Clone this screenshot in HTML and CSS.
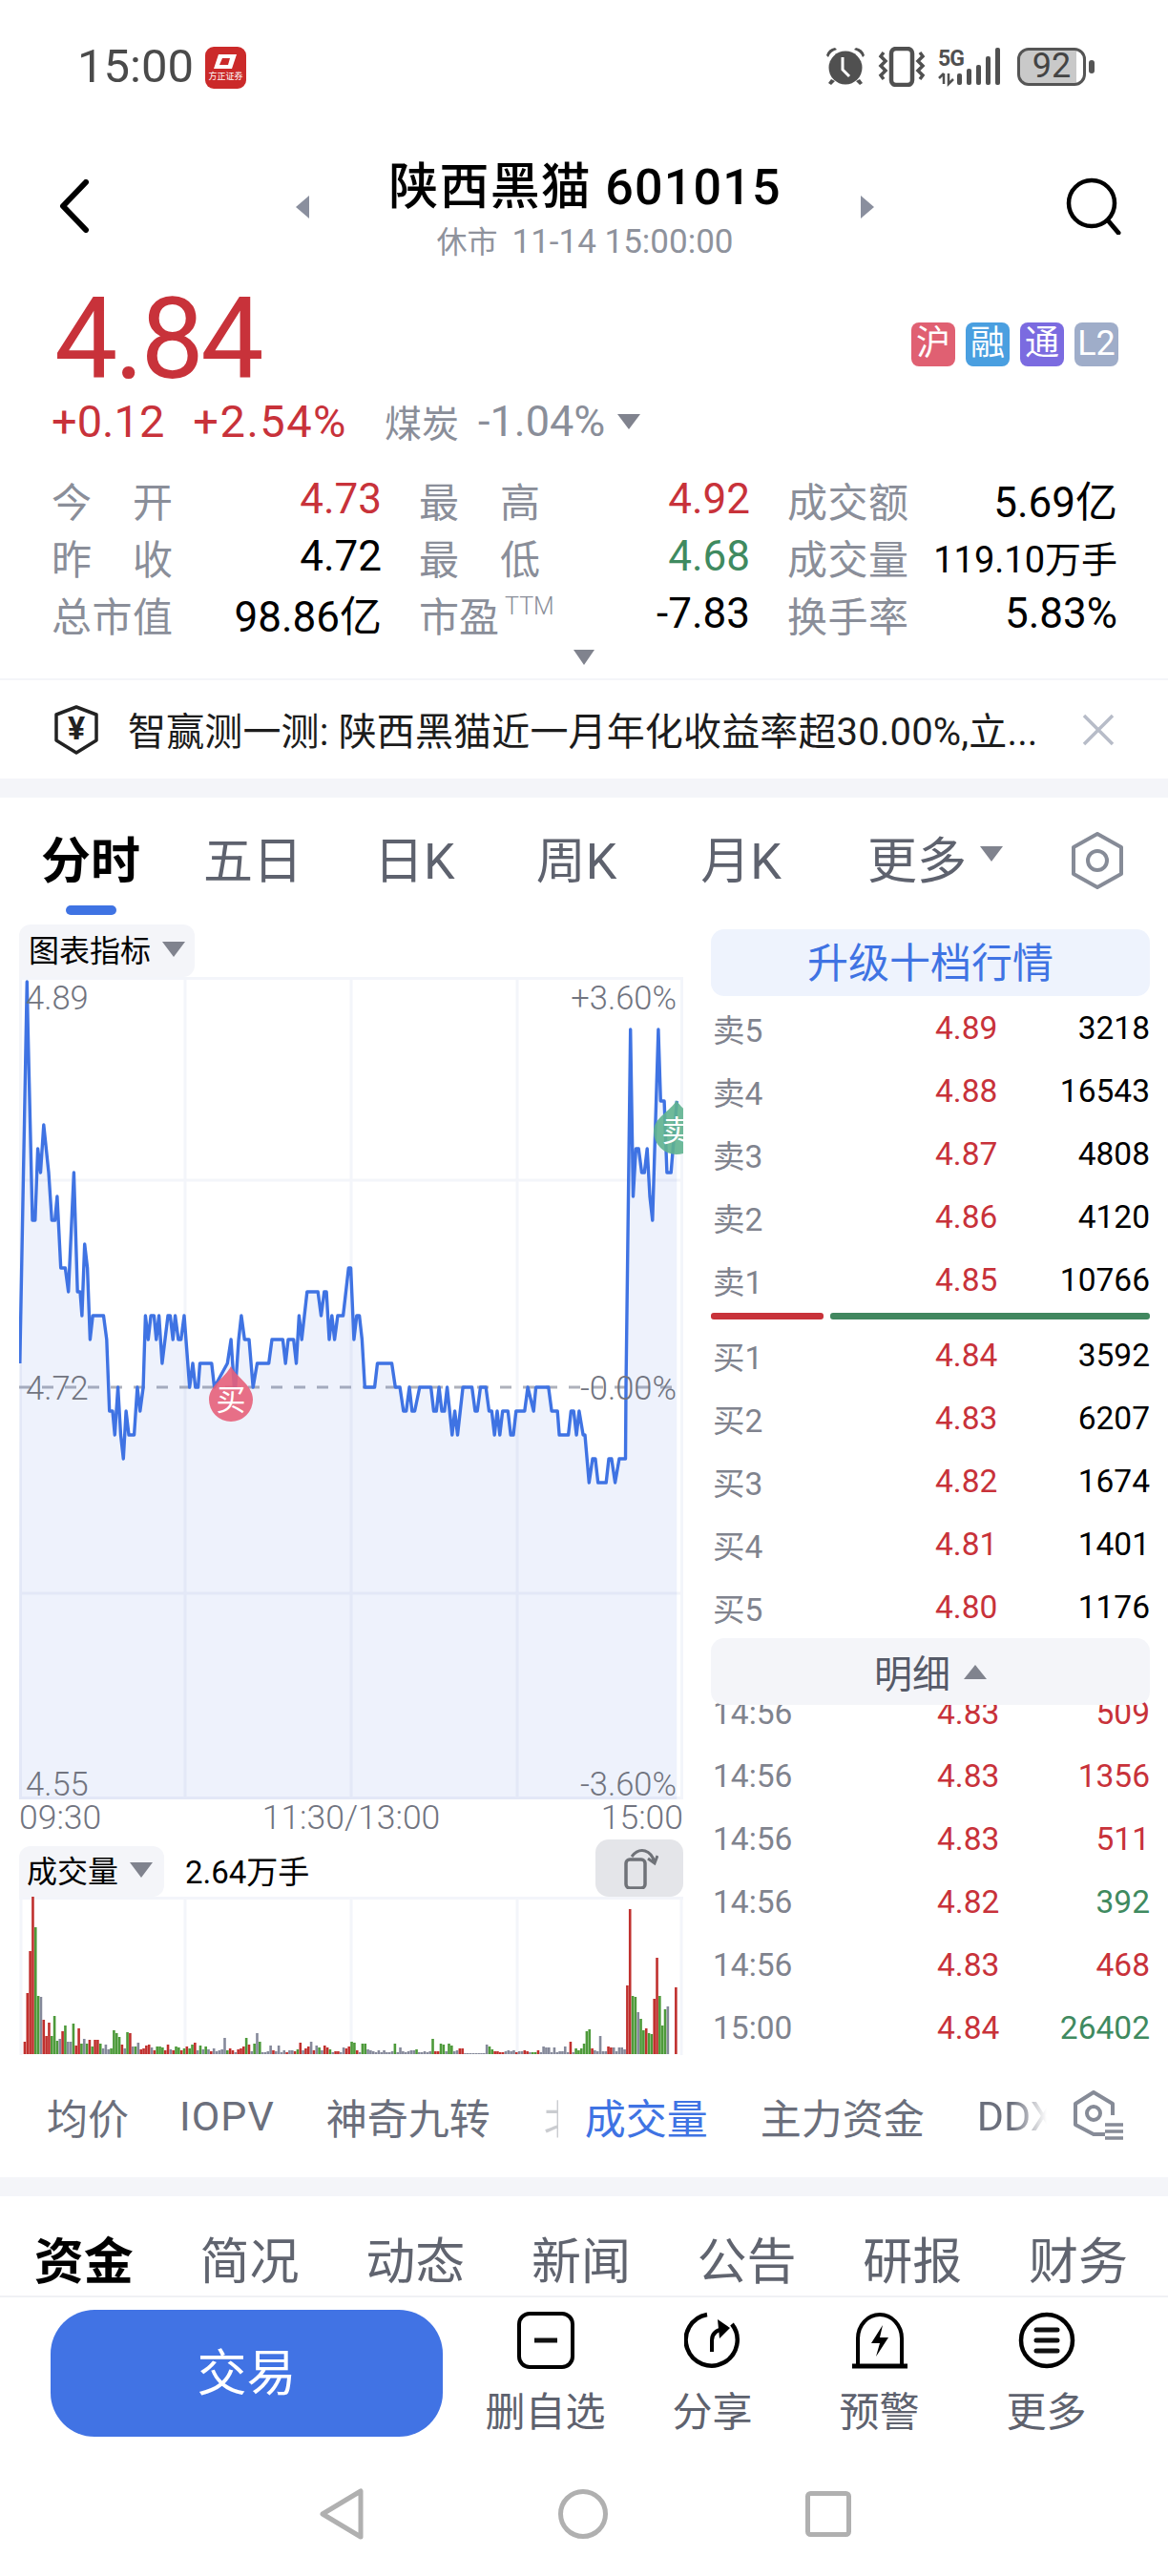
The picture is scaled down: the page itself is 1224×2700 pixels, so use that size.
FILE: index.html
```html
<!DOCTYPE html>
<html lang="zh-CN">
<head>
    <meta charset="UTF-8">
    <meta name="viewport" content="width=device-width, initial-scale=1.0">
    <title>陕西黑猫 601015</title>
    <link rel="stylesheet" href="styles.css">
</head>
<body>
    <!-- Status bar -->
    <div class="statusbar">
        <span class="clock">15:00</span>
        <svg class="app-logo" viewBox="0 0 43 44">
            <rect width="43" height="44" rx="9" fill="#cb2a2a"/>
            <path d="M14 8h19l-5 15H9z M18 12l-3 7h9l2-7z" fill="#fff" fill-rule="evenodd"/>
            <text class="logo-text" x="21.5" y="34" text-anchor="middle">方正证券</text>
        </svg>
        <div class="status-right">
            <svg class="st-alarm" viewBox="0 0 42 42">
                <path d="M1 9 Q3 2 10 1 L12 3 Q5 5 3 11z M41 9 Q39 2 32 1 L30 3 Q37 5 39 11z" fill="#505050"/>
                <circle cx="21" cy="22" r="17.500" fill="#505050"/>
                <path d="M6 34l-3 4 3 2 4-4z M36 34l3 4-3 2-4-4z" fill="#505050"/>
                <path d="M18 11v13l7 7" fill="none" stroke="#fff" stroke-width="3"/>
            </svg>
            <svg class="st-vibrate" viewBox="0 0 50 42">
                <rect x="14" y="2" width="22" height="38" rx="5" fill="none" stroke="#505050" stroke-width="4.500"/>
                <path d="M6 6l-3 4 5 5-5 5 5 5-5 5 3 4 M44 6l3 4-5 5 5 5-5 5 5 5-3 4" fill="none" stroke="#505050" stroke-width="3.500"/>
            </svg>
            <svg class="st-signal" viewBox="0 0 66 42">
                <text class="fiveg" x="0" y="20">5G</text>
                <path d="M6 28v11M1 33l5-5M11 28v11l5-5" fill="none" stroke="#505050" stroke-width="2.500"/>
                <rect x="20" y="28" width="5" height="12" rx="2" fill="#505050"/>
                <rect x="30" y="23" width="5" height="17" rx="2" fill="#505050"/>
                <rect x="40" y="19" width="5" height="21" rx="2" fill="#505050"/>
                <rect x="50" y="10" width="5" height="30" rx="2" fill="#505050"/>
                <rect x="60" y="1" width="5" height="39" rx="2" fill="#505050"/>
            </svg>
            <div class="battery"><span>92</span></div>
            <div class="battery-nub"></div>
        </div>
    </div>

    <!-- Title -->
    <div class="header">
        <svg class="back" viewBox="0 0 32 56"><path d="M28 3L4 28l24 25" fill="none" stroke="#000" stroke-width="6" stroke-linecap="round" stroke-linejoin="round"/></svg>
        <span class="tri-left"></span>
        <div class="title-block">
            <div class="title">陕西黑猫 601015</div>
            <div class="subtitle">休市 <span class="subtitle-time">11-14 15:00:00</span></div>
        </div>
        <span class="tri-right"></span>
        <svg class="search" viewBox="0 0 60 60"><circle cx="29" cy="27" r="24" fill="none" stroke="#000" stroke-width="4.500"/><path d="M46 45l11 13" stroke="#000" stroke-width="5" stroke-linecap="round"/></svg>
    </div>

    <!-- Quote -->
    <div class="quote">
        <div class="price-line">
            <span class="price">4.84</span>
            <div class="badges">
                <span class="badge badge-hu">沪</span>
                <span class="badge badge-rong">融</span>
                <span class="badge badge-tong">通</span>
                <span class="badge badge-l2">L2</span>
            </div>
        </div>
        <div class="change-line">
            <span class="red change-a">+0.12</span>
            <span class="red change-b">+2.54%</span>
            <span class="sector">煤炭</span>
            <span class="sector-pct">-1.04%</span>
            <span class="tri-down tri-sector"></span>
        </div>
        <div class="stats">
            <div class="stat"><span class="stat-label">今 开</span><span class="red">4.73</span></div>
            <div class="stat"><span class="stat-label">最 高</span><span class="red">4.92</span></div>
            <div class="stat"><span class="stat-label">成交额</span><span>5.69亿</span></div>
            <div class="stat"><span class="stat-label">昨 收</span><span>4.72</span></div>
            <div class="stat"><span class="stat-label">最 低</span><span class="green">4.68</span></div>
            <div class="stat"><span class="stat-label">成交量</span><span class="small-val">119.10万手</span></div>
            <div class="stat"><span class="stat-label">总市值</span><span>98.86亿</span></div>
            <div class="stat"><span class="stat-label stat-pe">市盈<sup>TTM</sup></span><span>-7.83</span></div>
            <div class="stat"><span class="stat-label">换手率</span><span>5.83%</span></div>
        </div>
        <div class="expand"><span class="tri-down tri-expand"></span></div>
    </div>

    <!-- Banner -->
    <div class="banner">
        <svg class="shield" viewBox="0 0 46 52">
            <path d="M23 2L44 10V37L23 50 2 37V10z" fill="none" stroke="#222" stroke-width="3.500" stroke-linejoin="round"/>
            <text class="shield-yen" x="23" y="36" text-anchor="middle">¥</text>
        </svg>
        <span class="banner-text">智赢测一测: 陕西黑猫近一月年化收益率超30.00%,立...</span>
        <svg class="banner-close" viewBox="0 0 34 34"><path d="M2 2l30 30M32 2L2 32" stroke="#b7bcc8" stroke-width="3.500"/></svg>
    </div>
    <div class="band"></div>

    <!-- Period tabs -->
    <div class="period-tabs">
        <span class="period active">分时</span>
        <span class="period period-five">五日</span>
        <span class="period">日K</span>
        <span class="period period-week">周K</span>
        <span class="period">月K</span>
        <span class="period period-more">更多</span>
        <span class="tri-down tri-more"></span>
        <svg class="hex-icon" viewBox="0 0 56 60"><path d="M28 2L53 16V44L28 58 3 44V16z" fill="none" stroke="#868b97" stroke-width="4" stroke-linejoin="round"/><circle cx="28" cy="30" r="10" fill="none" stroke="#868b97" stroke-width="4"/></svg>
    </div>
    <div class="period-mark"></div>

    <div class="main">
        <!-- Left column: charts -->
        <div class="left">
            <div class="chip"><span class="chip-text">图表指标</span><span class="tri-down tri-chip"></span></div>
            <div class="chart">
                <svg id="priceChart" class="chart-svg" viewBox="0 0 696 862" width="696" height="862">
                    <g class="grid">
                        <rect x="1.500" y="1.500" width="693" height="859"/>
                        <path d="M174 0V862M348 0V862M522 0V862M0 213H696M0 646H696"/>
                    </g>
                    <path d="M0 430H696" class="zero-line"/>
                    <polygon id="priceFill" class="price-fill"/>
                    <polyline id="priceLine" class="price-line-svg"/>
                    <path class="mark-buy" d="M222 408C228 420 245 428 245 443A23 23 0 0 1 199 443C199 428 216 420 222 408z"/>
                    <text class="mark-text" x="222" y="454" text-anchor="middle">买</text>
                    <path class="mark-sell" d="M689 129C695 141 713 147 713 162A24 24 0 0 1 665 162C665 147 683 141 689 129z"/>
                    <text class="mark-text" x="689" y="172" text-anchor="middle">卖</text>
                </svg>
                <span class="axis axis-tl">4.89</span>
                <span class="axis axis-tr">+3.60%</span>
                <span class="axis axis-ml">4.72</span>
                <span class="axis axis-mr">-0.00%</span>
                <span class="axis axis-bl">4.55</span>
                <span class="axis axis-br">-3.60%</span>
            </div>
            <div class="time-row"><span>09:30</span><span>11:30/13:00</span><span>15:00</span></div>
            <div class="vol-head">
                <div class="chip chip-vol"><span class="chip-text">成交量</span><span class="tri-down tri-chip"></span></div>
                <span class="vol-value">2.64万手</span>
                <div class="rotate-btn">
                    <svg viewBox="0 0 40 44" class="rotate-icon">
                        <rect x="6" y="13" width="20" height="30" rx="4" fill="none" stroke="#6f7278" stroke-width="3.500"/>
                        <path d="M12 10Q18 2 26 4Q33 6 36 16M29 12l7 5 3-8" fill="none" stroke="#6f7278" stroke-width="3"/>
                    </svg>
                </div>
            </div>
            <svg id="volChart" class="vol-svg" viewBox="0 0 696 166" width="696" height="166">
                <g class="grid">
                    <path d="M2 1V166M694 1V166M0 1.500H696M174 0V166M348 0V166M522 0V166"/>
                </g>
            </svg>
        </div>

        <!-- Right column: order book -->
        <div class="right">
            <div class="upgrade">升级十档行情</div>
            <div class="book-row"><span class="book-label">卖5</span><span class="red">4.89</span><span class="book-vol">3218</span></div>
            <div class="book-row"><span class="book-label">卖4</span><span class="red">4.88</span><span class="book-vol">16543</span></div>
            <div class="book-row"><span class="book-label">卖3</span><span class="red">4.87</span><span class="book-vol">4808</span></div>
            <div class="book-row"><span class="book-label">卖2</span><span class="red">4.86</span><span class="book-vol">4120</span></div>
            <div class="book-row"><span class="book-label">卖1</span><span class="red">4.85</span><span class="book-vol">10766</span></div>
            <div class="ratio"><span class="ratio-red"></span><span class="ratio-green"></span></div>
            <div class="book-row"><span class="book-label">买1</span><span class="red">4.84</span><span class="book-vol">3592</span></div>
            <div class="book-row"><span class="book-label">买2</span><span class="red">4.83</span><span class="book-vol">6207</span></div>
            <div class="book-row"><span class="book-label">买3</span><span class="red">4.82</span><span class="book-vol">1674</span></div>
            <div class="book-row"><span class="book-label">买4</span><span class="red">4.81</span><span class="book-vol">1401</span></div>
            <div class="book-row"><span class="book-label">买5</span><span class="red">4.80</span><span class="book-vol">1176</span></div>
            <div class="detail-bar"><span>明细</span><span class="tri-up"></span></div>
            <div class="ticks">
                <div class="book-row tick-row"><span class="book-label">14:56</span><span class="red">4.83</span><span class="book-vol red">509</span></div>
                <div class="book-row tick-row"><span class="book-label">14:56</span><span class="red">4.83</span><span class="book-vol red">1356</span></div>
                <div class="book-row tick-row"><span class="book-label">14:56</span><span class="red">4.83</span><span class="book-vol red">511</span></div>
                <div class="book-row tick-row"><span class="book-label">14:56</span><span class="red">4.82</span><span class="book-vol green">392</span></div>
                <div class="book-row tick-row"><span class="book-label">14:56</span><span class="red">4.83</span><span class="book-vol red">468</span></div>
                <div class="book-row tick-row"><span class="book-label">15:00</span><span class="red">4.84</span><span class="book-vol green">26402</span></div>
            </div>
        </div>
    </div>

    <!-- Indicator tabs -->
    <div class="indicators">
        <span class="ind ind-a">均价</span>
        <span class="ind ind-b">IOPV</span>
        <span class="ind ind-c">神奇九转</span>
        <span class="ind ind-cut">北</span>
        <span class="ind ind-on">成交量</span>
        <span class="ind ind-d">主力资金</span>
        <span class="ind ind-fade">DDX</span>
        <svg class="ind-icon" viewBox="0 0 56 54">
            <path d="M36 46H24L5 36V14L24 2 44 14V26" fill="none" stroke="#868b97" stroke-width="4" stroke-linejoin="round"/>
            <circle cx="24" cy="24" r="7" fill="none" stroke="#868b97" stroke-width="4"/>
            <path d="M36 36H55M36 43H55M36 50H55" stroke="#868b97" stroke-width="3.500"/>
        </svg>
    </div>
    <div class="band"></div>

    <!-- Info tabs -->
    <div class="info-tabs">
        <span class="info active">资金</span>
        <span class="info">简况</span>
        <span class="info">动态</span>
        <span class="info">新闻</span>
        <span class="info">公告</span>
        <span class="info">研报</span>
        <span class="info">财务</span>
    </div>

    <!-- Action bar -->
    <div class="actions">
        <div class="trade-btn">交易</div>
        <div class="action">
            <svg viewBox="0 0 60 60"><rect x="2" y="2" width="56" height="56" rx="11" fill="none" stroke="#000" stroke-width="4"/><path d="M18 30H42" stroke="#111" stroke-width="5"/></svg>
            <span>删自选</span>
        </div>
        <div class="action">
            <svg viewBox="0 0 60 60"><path d="M24 3A27 27 0 1 0 50 13" fill="none" stroke="#000" stroke-width="4.500"/><path d="M29 42V30Q29 20 41 18" fill="none" stroke="#000" stroke-width="4"/><path d="M35 8l13 9-11 11z" fill="#000"/></svg>
            <span>分享</span>
        </div>
        <div class="action">
            <svg viewBox="0 0 60 60"><path d="M7 55V28A23 25 0 0 1 53 28V55" fill="none" stroke="#000" stroke-width="4"/><path d="M1 57H59" stroke="#000" stroke-width="5"/><path d="M33 14L21 33H30L26 47 39 27H30z" fill="#000"/></svg>
            <span>预警</span>
        </div>
        <div class="action">
            <svg viewBox="0 0 60 60"><circle cx="30" cy="30" r="27" fill="none" stroke="#000" stroke-width="4.500"/><path d="M19 19H41M19 30H41M19 41H41" stroke="#111" stroke-width="5" stroke-linecap="round"/></svg>
            <span>更多</span>
        </div>
    </div>

    <!-- System nav -->
    <div class="sysnav">
        <svg class="nav-back" viewBox="0 0 46 54"><path d="M43 3V51L3 27z" fill="none" stroke="#b0b0b0" stroke-width="5" stroke-linejoin="round"/></svg>
        <svg class="nav-home" viewBox="0 0 52 52"><circle cx="26" cy="26" r="23.500" fill="none" stroke="#b0b0b0" stroke-width="5"/></svg>
        <svg class="nav-recent" viewBox="0 0 48 48"><rect x="2.500" y="2.500" width="43" height="43" rx="3" fill="none" stroke="#b0b0b0" stroke-width="5"/></svg>
    </div>

    <script src="chart.js"></script>
</body>
</html>
```

FILE: styles.css
```css
* {
    box-sizing: border-box;
}
body {
    margin: 0;
    width: 1224px;
    height: 2700px;
    overflow: hidden;
    background-color: #fff;
    font-family: Roboto, "Noto Sans CJK SC", sans-serif;
    color: #000;
}
svg {
    display: block;
    flex: none;
}
.red {
    color: #c8323a;
}
.green {
    color: #3f8a60;
}

/* triangles */
.tri-down {
    display: block;
    flex: none;
    width: 0;
    height: 0;
    border-left: 12px solid transparent;
    border-right: 12px solid transparent;
    border-top: 16px solid #80838e;
}
.tri-up {
    display: block;
    width: 0;
    height: 0;
    border-left: 12px solid transparent;
    border-right: 12px solid transparent;
    border-bottom: 15px solid #80838e;
    margin-left: 14px;
}
.tri-left,
.tri-right {
    display: block;
    flex: none;
    width: 0;
    height: 0;
    border-top: 12px solid transparent;
    border-bottom: 12px solid transparent;
}
.tri-left {
    border-right: 14px solid #8a8f9e;
}
.tri-right {
    border-left: 14px solid #8a8f9e;
}

/* status bar */
.statusbar {
    height: 140px;
    display: flex;
    align-items: flex-start;
    padding: 49px 0 0 81px;
}
.clock {
    font-size: 49px;
    line-height: 42px;
    color: #4a4a4a;
    width: 134px;
}
.app-logo {
    width: 43px;
    height: 44px;
}
.logo-text {
    font-size: 9px;
    fill: #fff;
    font-family: "Noto Sans CJK SC", sans-serif;
}
.status-right {
    margin-left: auto;
    padding-right: 77px;
    display: flex;
    align-items: center;
    height: 42px;
}
.st-alarm {
    width: 42px;
    height: 42px;
    margin-right: 13px;
}
.st-vibrate {
    width: 50px;
    height: 42px;
    margin-right: 13px;
}
.st-signal {
    width: 66px;
    height: 42px;
    margin-right: 17px;
}
.fiveg {
    font-size: 23px;
    font-weight: 700;
    fill: #505050;
    letter-spacing: -1px;
}
.battery {
    width: 72px;
    height: 40px;
    border: 3.5px solid #555;
    border-radius: 12px;
    background: linear-gradient(90deg, #c9c9c9 90%, #fff 90%);
    background-clip: padding-box;
    text-align: center;
    font-size: 36px;
    line-height: 33px;
    color: #444;
}
.battery-nub {
    width: 6px;
    height: 14px;
    margin-left: 3px;
    border-radius: 3px;
    background-color: #555;
}

/* title */
.header {
    height: 136px;
    display: flex;
    align-items: center;
    padding: 16px 0 0 62px;
}
.back {
    width: 32px;
    height: 56px;
}
.tri-left {
    margin-left: 216px;
    margin-top: 2px;
}
.title-block {
    width: 578px;
    text-align: center;
    padding-top: 8px;
}
.title {
    font-size: 52px;
    line-height: 60px;
    font-weight: 500;
    letter-spacing: 1.2px;
}
.subtitle {
    margin-top: 7px;
    font-size: 32px;
    line-height: 40px;
    color: #8e929c;
}
.subtitle-time {
    font-size: 35px;
    margin-left: 7px;
}
.tri-right {
    margin-top: 2px;
}
.search {
    width: 60px;
    height: 60px;
    margin-left: 199px;
}

/* quote */
.quote {
    padding: 25px 54px 0;
    height: 435px;
}
.price-line {
    display: flex;
    align-items: center;
    justify-content: space-between;
    height: 110px;
}
.price {
    font-size: 118px;
    line-height: 110px;
    letter-spacing: -3.500px;
    color: #c8323a;
    margin-left: 3px;
}
.badges {
    display: flex;
    margin-right: -2px;
    margin-top: 10px;
}
.badge {
    width: 46px;
    height: 46px;
    border-radius: 8px;
    margin-left: 11px;
    color: #fff;
    font-size: 36px;
    line-height: 44px;
    text-align: center;
}
.badge-hu {
    background-color: #e06072;
}
.badge-rong {
    background-color: #4a9fe0;
}
.badge-tong {
    background-color: #7b6be0;
}
.badge-l2 {
    background-color: #9fadc9;
}
.change-line {
    display: flex;
    align-items: center;
    height: 50px;
    margin-top: 5px;
    font-size: 47px;
}
.change-a {
    margin-left: 0;
}
.change-b {
    margin-left: 30px;
    letter-spacing: 1.500px;
}
.sector {
    color: #8a8e99;
    font-size: 39px;
    margin-left: 39px;
}
.sector-pct {
    margin-left: 20px;
    color: #8a8e99;
    font-size: 45px;
}
.tri-sector {
    margin-left: 13px;
    margin-top: 2px;
}
.stats {
    display: grid;
    grid-template-columns: 344px 345px 344px;
    column-gap: 41px;
    margin-top: 27px;
}
.stat {
    display: flex;
    justify-content: space-between;
    align-items: center;
    height: 60px;
    margin-right: -2px;
    font-size: 44px;
}
.stat-label {
    width: 127px;
    color: #8a8e99;
    font-size: 42px;
    text-align-last: justify;
}
.stat-pe {
    text-align-last: left;
    white-space: nowrap;
}
.stat-pe sup {
    font-size: 25px;
    line-height: 0;
    margin-left: 6px;
    font-weight: 300;
    vertical-align: 18px;
}
.small-val {
    font-size: 38px;
}
.expand {
    display: flex;
    justify-content: center;
    padding-top: 8px;
}
.tri-expand {
    border-left-width: 11px;
    border-right-width: 11px;
}

/* banner */
.banner {
    height: 105px;
    border-top: 2px solid #f4f5f9;
    display: flex;
    align-items: center;
    padding-left: 57px;
}
.shield {
    width: 46px;
    height: 52px;
}
.shield-yen {
    font-size: 34px;
    font-weight: 700;
    fill: #222;
}
.banner-text {
    margin-left: 31px;
    margin-top: -2px;
    font-size: 40px;
    letter-spacing: 0.15px;
    color: #1c1c1c;
    width: 966px;
    white-space: nowrap;
    overflow: hidden;
}
.banner-close {
    width: 34px;
    height: 34px;
    margin-left: 34px;
}
.band {
    height: 20px;
    background-color: #f4f5f9;
}

/* period tabs */
.period-tabs {
    margin-top: 12px;
    height: 101px;
    display: flex;
    align-items: center;
    padding-left: 43px;
    gap: 85px;
}
.period {
    font-size: 52px;
    color: #5e626e;
    white-space: nowrap;
}
.period.active {
    font-weight: 700;
    color: #000;
    margin-right: -19px;
}
.period-five {
    margin-right: -10px;
}
.period-week {
    margin-right: 3px;
}
.period-more {
    margin-left: 5px;
}
.tri-more {
    margin-left: -71px;
    margin-top: -8px;
}
.hex-icon {
    width: 56px;
    height: 60px;
    margin-left: -14px;
    margin-top: 6px;
}
.period-mark {
    width: 53px;
    height: 10px;
    margin-left: 69px;
    border-radius: 5px;
    background-color: #3f73e3;
}

/* main columns */
.main {
    margin-top: 10px;
    height: 1184px;
    display: flex;
    padding-left: 20px;
}
.left {
    width: 696px;
    flex: none;
}
.chip {
    display: inline-flex;
    align-items: center;
    height: 55px;
    padding: 0 10px;
    border-radius: 12px 12px 12px 0;
    background-color: #f4f5f9;
    font-size: 32px;
    vertical-align: top;
}
.chip-text {
    margin-top: -5px;
}
.tri-chip {
    margin-left: 12px;
    margin-top: -3px;
}
.chart {
    position: relative;
    width: 696px;
    height: 864px;
}
.grid {
    fill: none;
    stroke: #f3f5fa;
    stroke-width: 3;
}
.zero-line {
    stroke: #aeb1bb;
    stroke-width: 3;
    stroke-dasharray: 12 12;
}
.price-fill {
    fill: #3f73e3;
    fill-opacity: 0.09;
}
.price-line-svg {
    fill: none;
    stroke: #3f73e3;
    stroke-width: 3.400;
    stroke-linejoin: round;
}
.mark-buy {
    fill: #e6607a;
    fill-opacity: 0.9;
}
.mark-sell {
    fill: #5fb38f;
    fill-opacity: 0.9;
}
.mark-text {
    font-size: 31px;
    fill: #fff;
}
.axis {
    position: absolute;
    font-size: 34.500px;
    line-height: 36px;
    font-weight: 300;
    color: #71747f;
}
.axis-tl,
.axis-ml,
.axis-bl {
    left: 7px;
}
.axis-tr,
.axis-mr,
.axis-br {
    right: 7px;
}
.axis-tl,
.axis-tr {
    top: 4px;
}
.axis-ml,
.axis-mr {
    top: 413px;
}
.axis-bl,
.axis-br {
    top: 828px;
}
.time-row {
    height: 39px;
    display: flex;
    justify-content: space-between;
    font-size: 35.500px;
    line-height: 34px;
    font-weight: 300;
    color: #71747f;
}
.vol-head {
    display: flex;
    align-items: flex-end;
    height: 61px;
}
.chip-vol {
    height: 53px;
    padding: 0 12px 0 8px;
}
.vol-value {
    margin-left: 22px;
    font-size: 33px;
    line-height: 50px;
}
.rotate-btn {
    margin-left: auto;
    width: 92px;
    height: 60px;
    border-radius: 14px;
    background-color: #e4e5e9;
    display: flex;
    align-items: center;
    justify-content: center;
}
.rotate-icon {
    width: 40px;
    height: 44px;
}

/* order book */
.right {
    width: 460px;
    margin-left: 29px;
    padding-top: 5px;
}
.upgrade {
    height: 70px;
    border-radius: 14px;
    background-color: #eef3fd;
    color: #3f73e3;
    font-size: 43px;
    line-height: 72px;
    text-align: center;
}
.book-row {
    display: grid;
    grid-template-columns: 233px 65px 160px;
    height: 66px;
    padding-left: 2px;
    align-items: center;
    font-size: 33.500px;
    white-space: nowrap;
}
.book-label {
    color: #80838e;
}
.book-vol {
    text-align: right;
    color: #000;
}
.book-vol.red {
    color: #c8323a;
}
.book-vol.green {
    color: #3f8a60;
}
.ratio {
    display: flex;
    gap: 7px;
    height: 13px;
    padding: 2px 0 4px;
}
.ratio-red {
    width: 118px;
    border-radius: 3px;
    background-color: #c8323a;
}
.ratio-green {
    flex: 1;
    border-radius: 3px;
    background-color: #41875f;
}
.detail-bar {
    position: relative;
    z-index: 2;
    height: 70px;
    border-radius: 14px;
    background-color: #f4f5f9;
    display: flex;
    align-items: center;
    justify-content: center;
    font-size: 40px;
    color: #555a68;
}
.ticks {
    margin-top: -25px;
    height: 391px;
    overflow: hidden;
}
.tick-row {
    grid-template-columns: 235px 65px 158px;
}

/* indicator tabs */
.indicators {
    height: 129px;
    padding-left: 49px;
    display: flex;
    align-items: center;
}
.ind {
    font-size: 43px;
    color: #6b6f7c;
    white-space: nowrap;
}
.ind-b {
    margin-left: 53px;
    letter-spacing: 1px;
}
.ind-c {
    margin-left: 54px;
}
.ind-cut {
    margin-left: 56px;
    width: 15px;
    overflow: hidden;
    opacity: 0.35;
}
.ind-on {
    margin-left: 28px;
    color: #3f73e3;
}
.ind-d {
    margin-left: 55px;
}
.ind-fade {
    margin-left: 55px;
    width: 73px;
    overflow: hidden;
    -webkit-mask-image: linear-gradient(90deg, #000 50%, transparent);
    mask-image: linear-gradient(90deg, #000 50%, transparent);
}
.ind-icon {
    width: 56px;
    height: 54px;
    margin-left: 25px;
}

/* info tabs */
.info-tabs {
    height: 106px;
    border-bottom: 2px solid #f0f1f4;
    display: grid;
    grid-template-columns: repeat(7, 173.700px);
    padding-left: 1px;
    padding-top: 24px;
    align-items: center;
    text-align: center;
}
.info {
    font-size: 52px;
    color: #60646f;
}
.info.active {
    font-weight: 700;
    color: #000;
}

/* action bar */
.actions {
    height: 145px;
    display: flex;
    padding: 13px 0 0 53px;
}
.trade-btn {
    width: 411px;
    height: 133px;
    border-radius: 46px;
    background-color: #4173e4;
    color: #fff;
    font-size: 52px;
    line-height: 135px;
    text-align: center;
    margin-right: 20px;
}
.action {
    width: 175px;
    display: flex;
    flex-direction: column;
    align-items: center;
    font-size: 42px;
    line-height: 50px;
    color: #5e626e;
}
.action svg {
    width: 60px;
    height: 60px;
    margin-top: 2px;
    margin-bottom: 21px;
}

/* system nav */
.sysnav {
    display: flex;
    align-items: center;
    height: 54px;
    margin-top: 55px;
    padding-left: 335px;
}
.nav-back {
    width: 46px;
    height: 54px;
}
.nav-home {
    width: 52px;
    height: 52px;
    margin-left: 204px;
}
.nav-recent {
    width: 48px;
    height: 48px;
    margin-left: 207px;
}
```

FILE: chart.js
```js
// Price line: pairs of [x in px from page left * 2.119, price in cents]
const pricePts = [
    44,473, 60,489, 62,487, 72,479, 78,479, 84,482, 90,481, 97,483, 108,481, 115,479, 122,479, 127,480,
    135,477, 145,477, 152,476, 164,481, 172,476, 178,476, 182,475, 188,478, 194,477, 200,474, 206,475,
    230,475, 237,474, 243,471, 250,471, 255,470, 262,472, 268,470, 274,469, 280,471, 286,470, 298,470,
    305,472, 311,471, 318,472, 323,475, 329,474, 335,475, 342,475, 347,474, 353,475, 360,473, 373,475,
    378,475, 384,474, 389,475, 396,474, 402,474, 409,475, 421,472, 428,473, 434,472, 440,472, 444,473,
    470,473, 476,472, 505,473, 513,474, 520,472, 523,472, 530,474, 536,475, 543,474, 553,474, 562,472,
    571,473, 597,473, 604,474, 628,474, 634,473, 640,474, 652,474, 658,473, 664,475, 670,474, 682,476,
    706,476, 713,475, 720,476, 725,476, 731,474, 737,475, 743,474, 750,475, 762,475, 774,477, 779,477,
    786,474, 792,475, 798,475, 804,474, 810,472, 832,472, 838,473, 870,473, 878,472, 888,472, 896,471,
    902,471, 909,472, 915,471, 921,471, 932,472, 957,472, 963,471, 969,471, 975,472, 981,471, 987,471,
    993,472, 1004,470, 1010,471, 1016,470, 1028,472, 1048,472, 1055,471, 1060,471, 1067,472, 1079,472,
    1086,471, 1092,471, 1098,470, 1104,471, 1110,470, 1116,471, 1128,471, 1134,470, 1140,470, 1146,471,
    1165,471, 1172,472, 1185,471, 1190,472, 1218,472, 1225,471, 1238,471, 1242,470, 1262,470, 1268,471,
    1274,471, 1280,470, 1286,471, 1295,470, 1299,470, 1308,468, 1316,469, 1322,469, 1328,468, 1346,468,
    1352,469, 1358,469, 1366,468, 1375,469, 1389,469, 1390,472, 1400,487, 1406,480, 1412,482, 1418,482,
    1425,481, 1431,481, 1437,482, 1443,480, 1449,479, 1462,487, 1467,484, 1475,484, 1481,481, 1490,481,
    1503,484
];

// Volume bars, one every 6 units of the same x scale: colour letter + height in px
const volBars = `r13 r64 r108 r165 g133 g61 a60 r36 r19 r33 g19 g40 g14 a16 r24 g30 a13 a13 g32 r9 r27 g11 a16 g11 r15 g8 r15 r15 g11 a6 a10
a5 g6 g25 g22 g18 r10 a6 g23 r22 a8 g8 a12 r5 r6 r9 r10 a7 r4 g8 g8 g7 r4 r10 a5 r4 g8 g7 r4 g6
r8 g6 g10 r12 a4 g9 a5 g8 a5 r3 a6 a3 a4 a5 a17 g4 r6 r4 a2 r5 r6 r8 g17 r10 a3 g11 a22 g13 a2 a2 a3 a9 r4 a3 a9 a2 a4 r2 a4 a4 r3 g5 r12 a4 r6 r8 a13 r4 a9 g7 a4 r9 r7 g5 a2 r3 r3 a2 a7 r6 r8
g13 g12 r4 a2 g11 g11 a5 a4 a3 a2 a4 a2 a4 a2 a2 a3 g11 a2 a7 a3 a2 a3 a4 a4 g5 a2 a2 a3 a2 a3 g16 r3 r3 g11 g10 a3 g11 g9 a3 a4 r6 r6 a1 a1 a1 a1 a1 a1 a1 a1 a10 g8 g5 r3 r3 r2 r2 a3 a4 a3 a4 r2 a3 a3 r4 r3 a2 g2 g2 r4 a2
a8 a7 a7 a2 a7 a2 a3 a3 a8 a2 r13 a2 g6 g4 g6 g11 g24 g26 r6 a4 a3 a19 a3 a3 r8 r7 a7 a3 a7 a7 a5 r72 r152 g61 g60 a44 g37 g25 r27 g22 g21 r58 r101 g61 g30 g47 a50 r0 r0 r70`.split(/\s+/);

const SCALE = 2.119;
const CHART_LEFT = 20;
const SVG_NS = 'http://www.w3.org/2000/svg';
const VOL_COLORS = { r: '#c0302e', g: '#4d9a3a', a: '#85899a' };

function priceY(cents) {
    return 430 - (cents - 472) * 25;
}

let pts = [];
for (let i = 0; i < pricePts.length; i += 2) {
    let x = pricePts[i] / SCALE - CHART_LEFT;
    pts.push(x.toFixed(1) + ',' + priceY(pricePts[i + 1]));
}
document.getElementById('priceLine').setAttribute('points', pts.join(' '));
let lastX = pricePts[pricePts.length - 2] / SCALE - CHART_LEFT;
document.getElementById('priceFill').setAttribute('points', '0,862 ' + pts.join(' ') + ' ' + lastX.toFixed(1) + ',862');

let volSvg = document.getElementById('volChart');
volBars.forEach((bar, i) => {
    let h = parseInt(bar.slice(1), 10);
    if (!h) return;
    let rect = document.createElementNS(SVG_NS, 'rect');
    rect.setAttribute('x', ((55 + i * 6) / SCALE - CHART_LEFT - 1.3).toFixed(2));
    rect.setAttribute('y', 165 - h);
    rect.setAttribute('width', 2.6);
    rect.setAttribute('height', h);
    rect.setAttribute('fill', VOL_COLORS[bar[0]]);
    volSvg.appendChild(rect);
});
```
